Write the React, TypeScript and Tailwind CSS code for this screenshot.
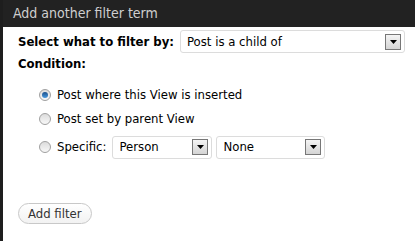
import React from 'react'

const font = { fontFamily: 'Tahoma, "DejaVu Sans Condensed", "DejaVu Sans", sans-serif' }

function Arrow() {
  return (
    <span className="flex h-[16px] w-[16px] items-center justify-center border border-[#777] bg-gradient-to-b from-[#f4f4f4] to-[#d4d4d4]">
      <svg width="7" height="4" viewBox="0 0 7 4">
        <path d="M0 0h7L3.5 4z" fill="#000" />
      </svg>
    </span>
  )
}

function Select({ value, width }: { value: string; width: string }) {
  return (
    <div className={`flex h-[23px] items-center justify-between rounded-[3px] border border-[#dcdcdc] bg-white pl-[6px] pr-[3px] ${width}`}>
      <span className="text-[13px] text-black">{value}</span>
      <Arrow />
    </div>
  )
}

function Radio({ checked }: { checked?: boolean }) {
  return (
    <span className="flex h-[12px] w-[12px] shrink-0 items-center justify-center rounded-full border border-[#a0a0a0] bg-gradient-to-b from-[#dcdcdc] to-[#f8f8f8]">
      {checked && <span className="h-[6px] w-[6px] rounded-full bg-gradient-to-b from-[#1a4f8a] to-[#4a9ae0]" />}
    </span>
  )
}

export default function App() {
  return (
    <div className="flex h-[241px] w-[415px] bg-[#222]" style={font}>
      <div className="w-[3px] shrink-0 bg-[#1e1e1e]" />
      <div className="flex flex-1 flex-col">
        <div className="flex h-[27px] items-center pl-[10px] text-[14px] text-[#cfcfcf]">Add another filter term</div>
        <div className="flex flex-1 flex-col bg-white pl-[15px] pt-[3px]">
          <div className="flex items-center gap-[6px]">
            <span className="text-[13px] font-bold text-black">Select what to filter by:</span>
            <Select value="Post is a child of" width="w-[225px]" />
          </div>
          <div className="mt-[1px] text-[13px] font-bold text-black">Condition:</div>
          <div className="mt-[15px] flex flex-col pl-[21px] text-[13px] text-black">
            <label className="flex h-[12px] items-center gap-[6px]">
              <Radio checked />
              <span>Post where this View is inserted</span>
            </label>
            <label className="mt-[12px] flex h-[12px] items-center gap-[6px]">
              <Radio />
              <span>Post set by parent View</span>
            </label>
            <label className="mt-[11px] flex items-center gap-[6px]">
              <Radio />
              <span>Specific:</span>
              <Select value="Person" width="w-[100px]" />
              <Select value="None" width="w-[109px] -ml-[2px]" />
            </label>
          </div>
          <div className="mt-[42px]">
            <button className="h-[21px] rounded-full border border-[#c8c8c8] bg-gradient-to-b from-white to-[#f2f2f2] px-[9px] text-[13px] text-[#333]">
              Add filter
            </button>
          </div>
        </div>
      </div>
    </div>
  )
}
